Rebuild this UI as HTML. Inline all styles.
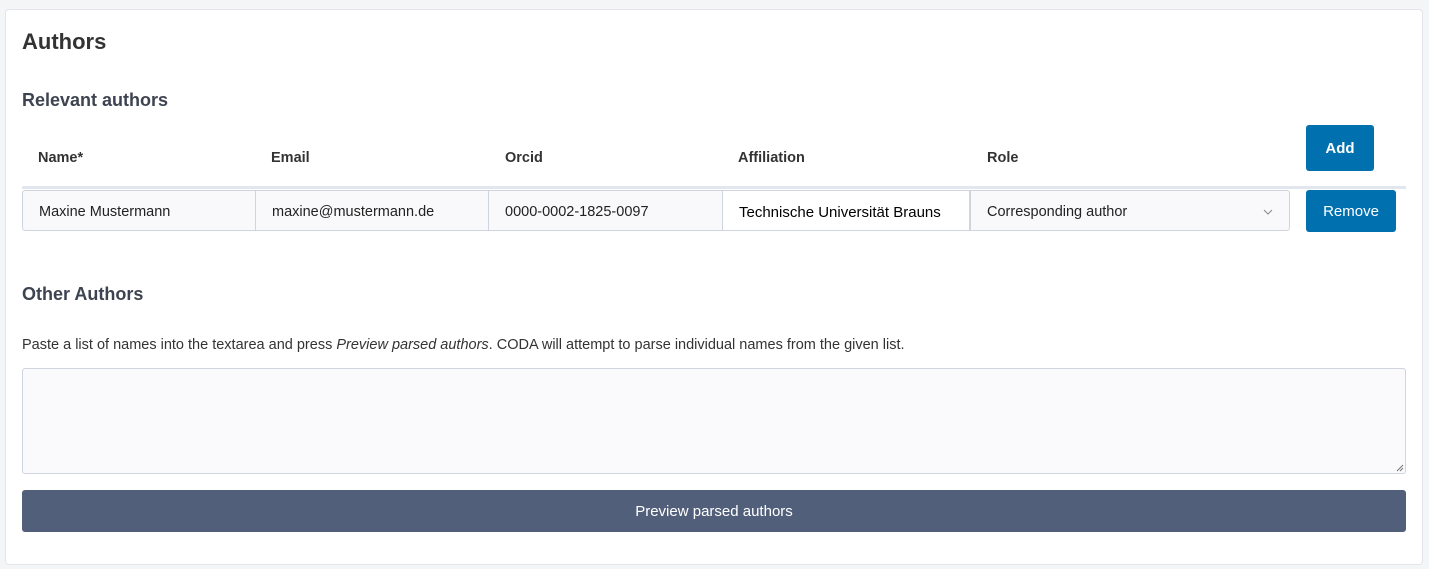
<!DOCTYPE html><html><head><style>
body{margin:0;background:#f4f5f7;font-family:"Liberation Sans",sans-serif;color:#333}
.card{position:absolute;left:5px;top:9px;width:1416px;height:554px;background:#fff;border:1px solid #e3e5ea;border-radius:4px}
.a{position:absolute;white-space:nowrap}
.h1{font-size:22px;font-weight:bold;color:#333;left:22px;top:29px}
.h2{font-size:18px;font-weight:bold;color:#3d4350;left:22px;top:90px}
.th{font-size:14.5px;font-weight:bold;top:150px;color:#333}
.inp{position:absolute;top:190px;height:41px;background:#f9f9fb;border:1px solid #cfd4de;box-sizing:border-box;font-size:14.5px;line-height:43px;padding-left:16px;color:#222}
.btn{position:absolute;background:#0170af;color:#fff;border-radius:3px;text-align:center;font-size:15px}
</style></head><body>
<div class="card"></div>
<div class="a h1">Authors</div>
<div class="a h2">Relevant authors</div>
<div class="a th" style="left:38px">Name*</div>
<div class="a th" style="left:271px">Email</div>
<div class="a th" style="left:505px">Orcid</div>
<div class="a th" style="left:738px">Affiliation</div>
<div class="a th" style="left:987px">Role</div>
<div class="btn" style="left:1306px;top:125px;width:68px;height:46px;line-height:48px;font-weight:bold">Add</div>
<div class="a" style="left:22px;top:186px;width:1384px;height:3px;background:#e2e6ee"></div>
<div class="inp" style="left:22px;width:234px;border-radius:3px 0 0 3px">Maxine Mustermann</div>
<div class="inp" style="left:255px;width:234px">maxine@mustermann.de</div>
<div class="inp" style="left:488px;width:235px">0000-0002-1825-0097</div>
<div class="inp" style="left:722px;width:248px;background:#fff;padding-left:16px;color:#000;font-size:15px">Technische Universität Brauns</div>
<div class="inp" style="left:970px;width:320px;border-radius:0 3px 3px 0">Corresponding author<svg style="position:absolute;right:16px;top:18px" width="10" height="6"><path d="M1 1L5 5L9 1" stroke="#888" fill="none"/></svg></div>
<div class="btn" style="left:1306px;top:190px;width:90px;height:42px;line-height:44px">Remove</div>
<div class="a h2" style="top:284px">Other Authors</div>
<div class="a" style="left:22px;top:337px;font-size:14.5px;color:#333">Paste a list of names into the textarea and press <i>Preview parsed authors</i>. CODA will attempt to parse individual names from the given list.</div>
<div class="a" style="left:22px;top:368px;width:1384px;height:106px;box-sizing:border-box;border:1px solid #cfd4de;border-radius:3px;background:#fafafc"><svg style="position:absolute;right:1px;bottom:1px" width="8" height="8"><path d="M7 1L1 7M7 4L4 7" stroke="#777"/></svg></div>
<div class="a" style="left:22px;top:490px;width:1384px;height:42px;line-height:44px;background:#525f7a;color:#fff;text-align:center;font-size:15px;border-radius:3px">Preview parsed authors</div>
</body></html>
